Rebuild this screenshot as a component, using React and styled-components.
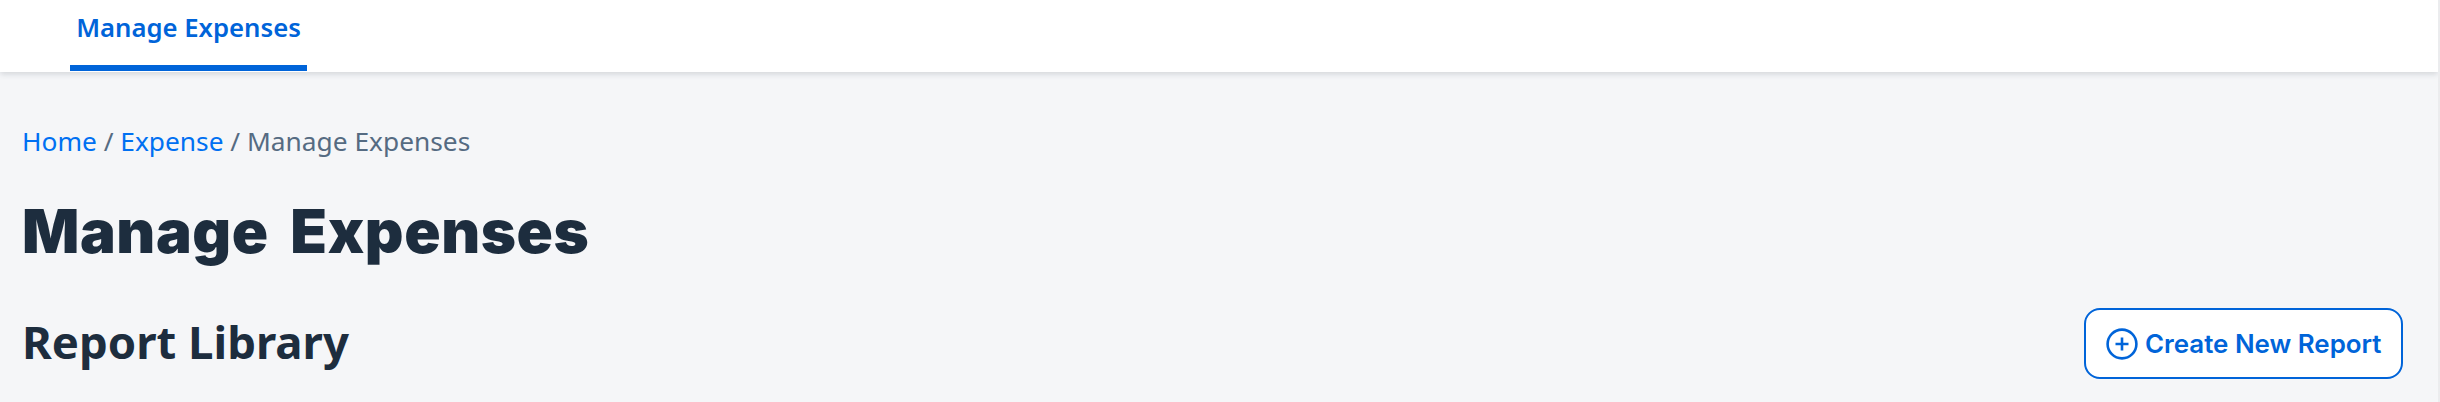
import React from "react";
import styled, { createGlobalStyle } from "styled-components";

const Global = createGlobalStyle`
  html, body {
    margin: 0;
    padding: 0;
    background: #f5f6f8;
    overflow: hidden;
  }
  * {
    box-sizing: border-box;
  }
`;

const Page = styled.div`
  width: 2440px;
  height: 402px;
  overflow: hidden;
  font-family: "Noto Sans", "Open Sans", sans-serif;
  background: #f5f6f8;
  border-right: 2px solid #ebecee;
`;

const TopBar = styled.div`
  height: 72px;
  padding-left: 70px;
  background: #fff;
  box-shadow: 0 2px 6px rgba(50, 60, 80, 0.18);
  display: flex;
`;

const Tab = styled.div`
  width: 237px;
  height: 71px;
  padding-top: 11px;
  text-align: center;
  font-size: 25.7px;
  line-height: 34px;
  font-weight: 600;
  color: #0064d9;
  border-bottom: 6px solid #0064d9;
`;

const Content = styled.div`
  padding: 51px 35px 0 22px;
`;

const Crumbs = styled.div`
  font-size: 26.3px;
  line-height: 36px;
  color: #556b82;
`;

const CrumbLink = styled.a`
  color: #0070f2;
  text-decoration: none;
`;

const Title = styled.h1`
  margin: 34px 0 0;
  font-family: "Inter", sans-serif;
  font-size: 60px;
  line-height: 76px;
  font-weight: 900;
  letter-spacing: 0.6px;
  word-spacing: 9px;
  color: #1d2d3e;
`;

const Row = styled.div`
  margin-top: 39px;
  display: flex;
  align-items: center;
  justify-content: space-between;
`;

const Subtitle = styled.h2`
  margin: 0;
  padding-bottom: 6px;
  font-size: 45.5px;
  line-height: 60px;
  font-weight: 700;
  color: #1d2d3e;
`;

const CreateButton = styled.button`
  width: 319px;
  height: 71px;
  padding: 0 0 0 20px;
  display: flex;
  align-items: center;
  gap: 7px;
  background: #fff;
  border: 2px solid #0064d9;
  border-radius: 16px;
  color: #0064d9;
  font-family: "Inter", sans-serif;
  font-size: 25.9px;
  font-weight: 600;
  white-space: nowrap;
`;

const PlusIcon = () => (
  <svg width="32" height="32" viewBox="0 0 32 32" fill="none" stroke="#0064d9" strokeWidth="2.6">
    <circle cx="16" cy="16" r="14.4" />
    <path d="M16 9.5v13M9.5 16h13" />
  </svg>
);

export default function App() {
  return (
    <>
      <Global />
      <Page>
        <TopBar>
          <Tab>Manage Expenses</Tab>
        </TopBar>
        <Content>
          <Crumbs>
            <CrumbLink>Home</CrumbLink> / <CrumbLink>Expense</CrumbLink> / Manage Expenses
          </Crumbs>
          <Title>Manage Expenses</Title>
          <Row>
            <Subtitle>Report Library</Subtitle>
            <CreateButton>
              <PlusIcon />
              Create New Report
            </CreateButton>
          </Row>
        </Content>
      </Page>
    </>
  );
}
